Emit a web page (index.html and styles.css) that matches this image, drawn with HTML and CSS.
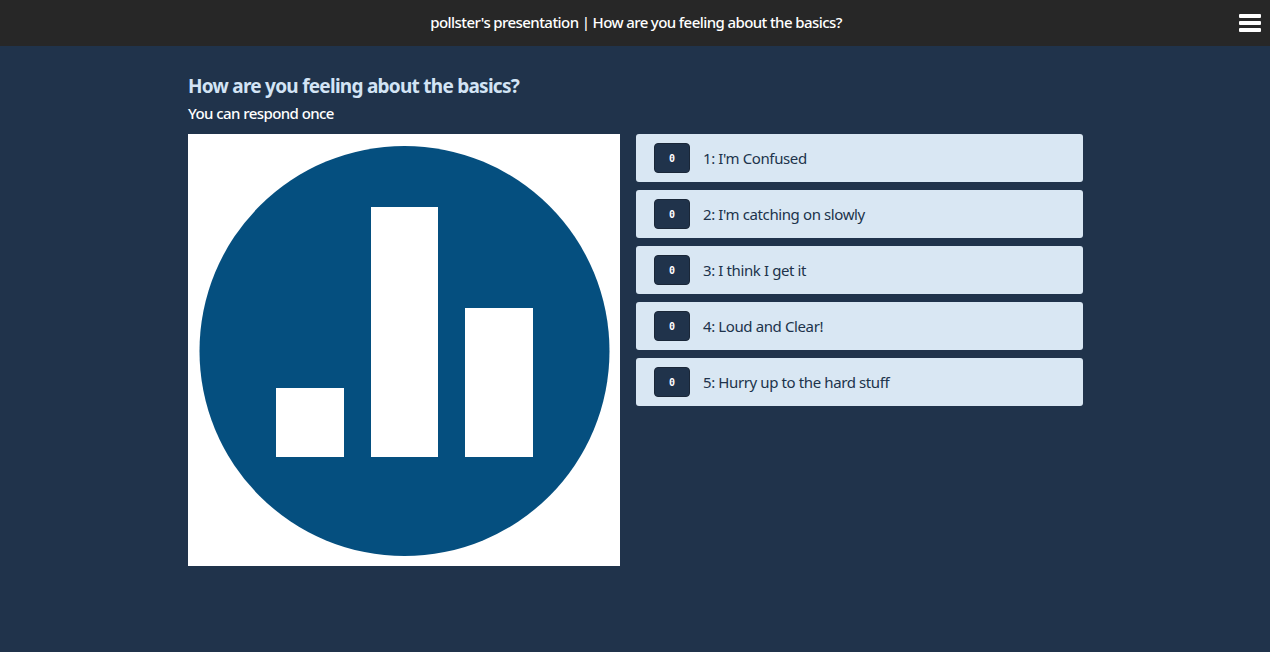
FILE: index.html
```html
<!DOCTYPE html>
<html lang="en">
<head>
<meta charset="utf-8">
<title>pollster's presentation</title>
<link rel="stylesheet" href="styles.css">
</head>
<body>
<header class="topbar">
  <div class="topbar-title">pollster's presentation | How are you feeling about the basics?</div>
  <button class="menu" aria-label="Menu"><span></span><span></span><span></span></button>
</header>
<main class="content">
  <h1 class="question">How are you feeling about the basics?</h1>
  <p class="hint">You can respond once</p>
  <div class="poll">
    <svg class="poll-image" viewBox="0 0 432 432" role="img" aria-label="Poll logo">
      <rect width="432" height="432" fill="#fff"/>
      <circle cx="216.5" cy="217" r="205" fill="#054f7f"/>
      <rect x="88" y="254" width="68" height="69" fill="#fff"/>
      <rect x="183" y="73" width="67" height="250" fill="#fff"/>
      <rect x="277" y="174" width="68" height="149" fill="#fff"/>
    </svg>
    <ul class="options">
      <li class="option"><span class="count">0</span><span class="label">1: I'm Confused</span></li>
      <li class="option"><span class="count">0</span><span class="label">2: I'm catching on slowly</span></li>
      <li class="option"><span class="count">0</span><span class="label">3: I think I get it</span></li>
      <li class="option"><span class="count">0</span><span class="label">4: Loud and Clear!</span></li>
      <li class="option"><span class="count">0</span><span class="label">5: Hurry up to the hard stuff</span></li>
    </ul>
  </div>
</main>
</body>
</html>
```
FILE: styles.css
```css
* { box-sizing: border-box; }
html, body { height: 100%; }
body {
  margin: 0;
  background: #20334b;
  font-family: "Noto Sans", "Open Sans", sans-serif;
  overflow: hidden;
}
.topbar {
  height: 46px;
  padding-bottom: 3px;
  background: #272727;
  display: flex;
  align-items: center;
  justify-content: center;
  position: relative;
}
.topbar-title {
  color: #fff;
  font-size: 15px;
  font-weight: 500;
  letter-spacing: -0.56px;
  word-spacing: -0.2px;
  transform: translateX(1px);
}
.menu {
  position: absolute;
  right: 9px;
  top: 14px;
  width: 22px;
  height: 18px;
  padding: 0;
  border: 0;
  background: none;
  display: flex;
  flex-direction: column;
  gap: 3.5px;
}
.menu span {
  display: block;
  height: 3.5px;
  background: #fff;
  border-radius: 1px;
}
.content {
  width: 895px;
  margin-left: 188px;
  padding-top: 28px;
}
.question {
  margin: 0;
  height: 24px;
  line-height: 24px;
  font-size: 19px;
  font-weight: 700;
  letter-spacing: -0.74px;
  color: #d3e4f5;
}
.hint {
  margin: 6px 0 0;
  height: 19px;
  line-height: 19px;
  font-size: 15px;
  font-weight: 500;
  letter-spacing: -0.57px;
  color: #fff;
}
.poll {
  display: flex;
  gap: 16px;
  margin-top: 11px;
  align-items: flex-start;
}
.poll-image {
  width: 432px;
  height: 432px;
  flex: none;
  display: block;
}
.options {
  list-style: none;
  margin: 0;
  padding: 0;
  flex: 1;
  display: flex;
  flex-direction: column;
  gap: 8px;
}
.option {
  height: 48px;
  background: #d9e7f3;
  border-radius: 3px;
  display: flex;
  align-items: center;
  padding-left: 18px;
  gap: 13px;
  color: #20334b;
}
.count {
  width: 36px;
  height: 30px;
  background: #20334b;
  border: 1px solid #1a2738;
  border-radius: 4px;
  color: #fff;
  font-family: "DejaVu Sans Mono", monospace;
  font-size: 10px;
  font-weight: 700;
  display: flex;
  align-items: center;
  justify-content: center;
}
.label {
  font-size: 15px;
  letter-spacing: -0.39px;
}
```
